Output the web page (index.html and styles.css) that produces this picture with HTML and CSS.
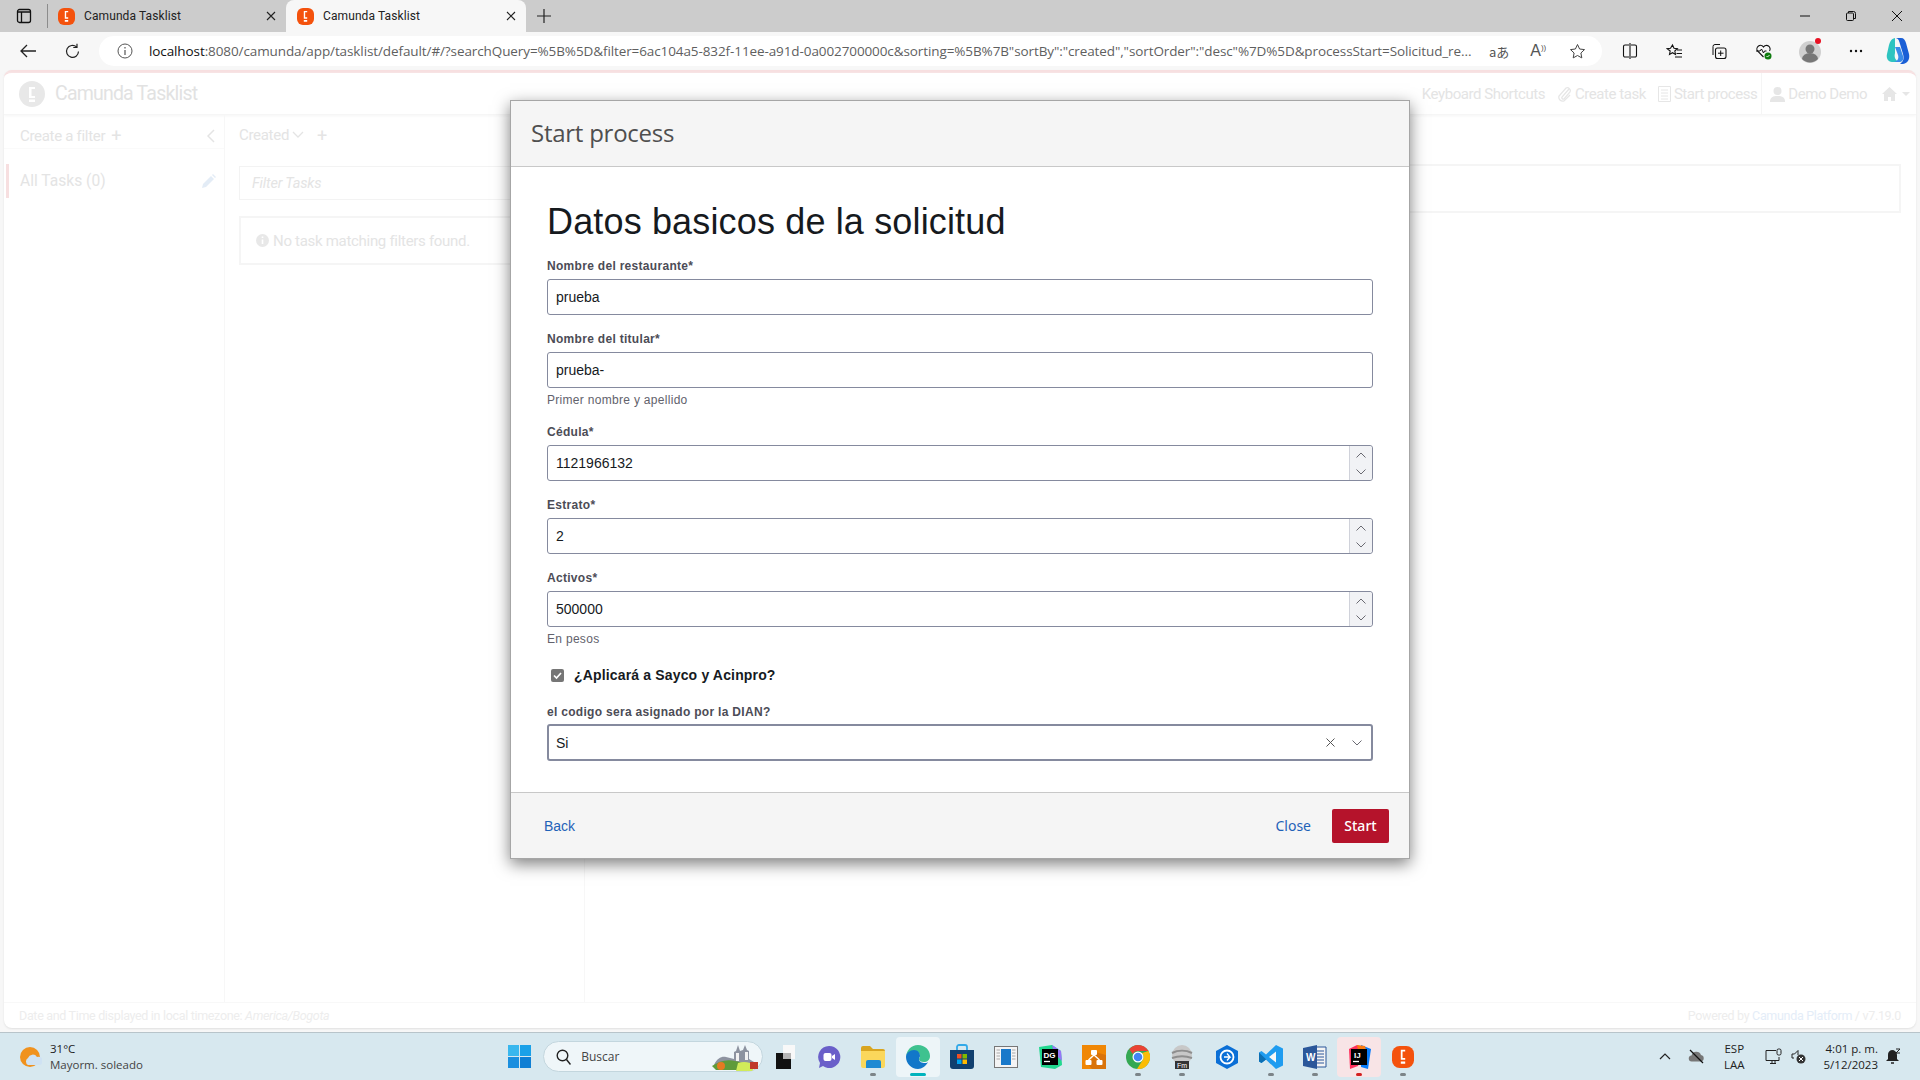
FILE: index.html
```html
<!DOCTYPE html>
<html lang="en">
  <head>
    <meta charset="UTF-8" />
    <title>Camunda Tasklist</title>
    <link rel="stylesheet" href="styles.css">
  </head>
  <body>
    <svg class="defs" width="0" height="0">
      <symbol id="cam" viewBox="0 0 20 20">
        <rect width="20" height="20" rx="7" fill="#f4520d"/>
        <path d="M8 3.500h4v1.600H9.600v5.800H12v1.600H8zM8 14h4v2.200H8z" fill="#fff"/>
      </symbol>
      <symbol id="up" viewBox="0 0 12 8"><path d="M1.5 6.5 6 2l4.500 4.500" fill="none" stroke="#6a6a72" stroke-width="1"/></symbol>
      <symbol id="down" viewBox="0 0 12 8"><path d="M1.500 1.500 6 6l4.500-4.500" fill="none" stroke="#6a6a72" stroke-width="1"/></symbol>
    </svg>

    <div class="tabbar">
      <svg class="tab-toggle" width="16" height="16" viewBox="0 0 16 16"><rect x="1.500" y="1.500" width="13" height="13" rx="2" fill="none" stroke="#111" stroke-width="1.300"/><path d="M1.500 4h13M5.500 4v10" stroke="#111" stroke-width="1.300"/></svg>
      <span class="tab-sep"></span>
      <div class="tab">
        <svg width="17" height="17"><use href="#cam"/></svg>
        <span class="tab-title">Camunda Tasklist</span>
        <svg class="tab-close" width="10" height="10" viewBox="0 0 10 10"><path d="M1 1l8 8M9 1l-8 8" stroke="#222" stroke-width="1.100"/></svg>
      </div>
      <div class="tab tab-active">
        <svg width="17" height="17"><use href="#cam"/></svg>
        <span class="tab-title">Camunda Tasklist</span>
        <svg class="tab-close" width="10" height="10" viewBox="0 0 10 10"><path d="M1 1l8 8M9 1l-8 8" stroke="#222" stroke-width="1.100"/></svg>
      </div>
      <svg class="tab-new" width="14" height="14" viewBox="0 0 14 14"><path d="M7 0v14M0 7h14" stroke="#222" stroke-width="1.200"/></svg>
      <div class="win-btns">
        <svg width="10" height="10" viewBox="0 0 10 10"><path d="M0 5h10" stroke="#111"/></svg>
        <svg width="10" height="10" viewBox="0 0 10 10"><rect x=".5" y="2" width="7" height="7.500" rx="1" fill="none" stroke="#111"/><path d="M2.500 2V.5h5a2 2 0 0 1 2 2v5H8" fill="none" stroke="#111"/></svg>
        <svg width="10" height="10" viewBox="0 0 10 10"><path d="M0 0l10 10M10 0L0 10" stroke="#111"/></svg>
      </div>
    </div>

    <div class="toolbar">
      <svg class="tool-back" width="18" height="16" viewBox="0 0 18 16"><path d="M17 8H2M8 2 2 8l6 6" fill="none" stroke="#222" stroke-width="1.300"/></svg>
      <svg class="tool-reload" width="17" height="17" viewBox="0 0 17 17"><path d="M14.500 8.500a6 6 0 1 1-2-4.600M13 .8v3.700H9.300" fill="none" stroke="#222" stroke-width="1.200"/></svg>
      <div class="address">
        <svg width="16" height="16" viewBox="0 0 16 16"><circle cx="8" cy="8" r="7" fill="none" stroke="#555"/><path d="M8 7v5M8 4v1.500" stroke="#555" stroke-width="1.200"/></svg>
        <span class="url"><b>localhost</b>:8080/camunda/app/tasklist/default/#/?searchQuery=%5B%5D&amp;filter=6ac104a5-832f-11ee-a91d-0a002700000c&amp;sorting=%5B%7B"sortBy":"created","sortOrder":"desc"%7D%5D&amp;processStart=Solicitud_re...</span>
        <span class="addr-icon addr-tr">aあ</span>
        <span class="addr-icon addr-read">A<small>))</small></span>
        <svg class="addr-star" width="17" height="17" viewBox="0 0 17 17"><path d="m8.500 1.500 2.100 4.500 4.900.6-3.600 3.400.9 4.900-4.300-2.400-4.300 2.400.9-4.900L1.500 6.600l4.900-.6z" fill="none" stroke="#444"/></svg>
      </div>
      <div class="tool-icons">
        <svg width="16" height="16" viewBox="0 0 16 16"><path d="M7 2H3a1.500 1.500 0 0 0-1.500 1.500v9A1.500 1.500 0 0 0 3 14h4M9 2h4a1.500 1.500 0 0 1 1.500 1.500v9A1.500 1.500 0 0 1 13 14H9M8 0v16" fill="none" stroke="#111" stroke-width="1.100"/></svg>
        <svg width="17" height="17" viewBox="0 0 17 17"><path d="m6.500 2 1.500 3.300 3.300.4-2.500 2.300.7 3.400-3-1.700-3 1.700.7-3.400L1.200 5.700l3.300-.4zM11 7h5M10.500 10.500H16M9 14h7" fill="none" stroke="#111" stroke-width="1.100"/></svg>
        <svg width="17" height="17" viewBox="0 0 17 17"><path d="M3 12V3.500A2 2 0 0 1 5 1.500h5" fill="none" stroke="#111"/><rect x="5.500" y="5" width="10.500" height="10.500" rx="2" fill="none" stroke="#111" stroke-width="1.100"/><path d="M10.700 7.500v5.500M8 10.200h5.500" stroke="#111"/></svg>
        <svg width="17" height="17" viewBox="0 0 17 17"><path d="M8.500 14 2.500 8a3.500 3.500 0 0 1 6-4 3.500 3.500 0 0 1 6 4" fill="none" stroke="#111" stroke-width="1.100"/><path d="M1 8h4l1.500-2 2 4 1-2h2" fill="none" stroke="#111"/><circle cx="13" cy="13" r="3.500" fill="#107c10"/><path d="m11.500 13 1 1 2-2" fill="none" stroke="#fff" stroke-width=".9"/></svg>
        <svg class="tool-nudge" width="24" height="28" viewBox="0 0 24 28"><circle cx="11" cy="15" r="11" fill="#d0d0d0"/><circle cx="11" cy="12" r="4.500" fill="#777"/><path d="M3 22a8 6 0 0 1 16 0 11 11 0 0 1-16 0z" fill="#777"/><circle cx="19" cy="4" r="3" fill="#e81123"/></svg>
        <svg class="tool-nudge" width="14" height="4" viewBox="0 0 14 4"><circle cx="2" cy="2" r="1.200" fill="#111"/><circle cx="7" cy="2" r="1.200" fill="#111"/><circle cx="12" cy="2" r="1.200" fill="#111"/></svg>
        <svg width="24" height="28" viewBox="0 0 24 28"><path d="M9 1h6c3 0 4 2 5 5l3 11c1 5-1 9-6 10h-3c4-3 4-6 3-10L14 7C13 3 12 1 9 1z" fill="#1a5fd6"/><path d="M9 1C5 2 4 5 3 8L1 17c-1 4 1 8 5 8h7c-4-2-5-5-4-9z" fill="#2ec4c0"/><path d="M9 10h5l3 9c1 4-1 6-4 6H8c4-1 5-4 4-7z" fill="#3a8be8"/></svg>
      </div>
    </div>

    <div class="page">
      <div class="page-nav">
        <svg width="26" height="26" viewBox="0 0 26 26"><circle cx="13" cy="13" r="13" fill="#e8e8e8"/><path d="M10 6h6v2h-3.500v7H16v2h-6zM10 18.500h6V21h-6z" fill="#fff"/></svg>
        <span class="brand">Camunda Tasklist</span>
        <div class="nav-right">
          <span>Keyboard Shortcuts</span>
          <span class="nav-item"><svg width="15" height="16" viewBox="0 0 15 16"><path d="M12 3 5 11a1.500 1.500 0 0 0 2 2l6-7a3 3 0 0 0-4-4L2 10a4 4 0 0 0 5 5l6-6" fill="none" stroke="#e6e6e6" stroke-width="1.300"/></svg>Create task</span>
          <span class="nav-item"><svg width="13" height="16" viewBox="0 0 13 16"><path d="M.5.5h12v15H.5zM3 4h7M3 7h7M3 10h7M3 13h7" fill="none" stroke="#e6e6e6"/></svg>Start process</span>
          <span class="nav-item nav-user"><svg width="15" height="16" viewBox="0 0 15 16"><circle cx="7.500" cy="5" r="4" fill="#e6e6e6"/><path d="M0 16c0-5 3-6 7.500-6s7.500 1 7.500 6z" fill="#e6e6e6"/></svg>Demo Demo</span>
          <span class="nav-item nav-home"><svg width="15" height="15" viewBox="0 0 15 15"><path d="M7.500 1 0 8h2v7h4v-4h3v4h4V8h2z" fill="#e6e6e6"/></svg><i class="caret"></i></span>
        </div>
      </div>
      <div class="page-main">
        <aside class="filters">
          <div class="filters-head">
            <span>Create a filter</span><b>+</b>
            <svg width="8" height="14" viewBox="0 0 8 14"><path d="M7 1 1 7l6 6" fill="none" stroke="#e4e4e4" stroke-width="1.500"/></svg>
          </div>
          <div class="filter-row">
            <span>All Tasks (0)</span>
            <svg width="14" height="14" viewBox="0 0 14 14"><path d="M0 14l1-4 8-8 3 3-8 8zM10 1l1-1 3 3-1 1z" fill="#e3ecf6"/></svg>
          </div>
        </aside>
        <section class="list">
          <div class="list-head">
            <span>Created</span>
            <svg width="12" height="8" viewBox="0 0 12 8"><path d="M1 1l5 5 5-5" fill="none" stroke="#e4e4e4" stroke-width="1.300"/></svg>
            <b>+</b>
          </div>
          <div class="filter-box">Filter Tasks</div>
          <div class="empty-box">
            <svg width="13" height="13" viewBox="0 0 13 13"><circle cx="6.500" cy="6.500" r="6.500" fill="#e8e8e8"/><path d="M6.500 5.500v4.500M6.500 2.500V4" stroke="#fff" stroke-width="1.600"/></svg>
            No task matching filters found.
          </div>
        </section>
        <section class="detail">
          <div class="detail-box"></div>
        </section>
      </div>
      <div class="page-foot">
        <span>Date and Time displayed in local timezone: <i>America/Bogota</i></span>
        <span>Powered by <em>Camunda Platform</em> / v7.19.0</span>
      </div>
    </div>

    <div class="modal">
      <div class="modal-head">Start process</div>
      <div class="modal-body">
        <h1>Datos basicos de la solicitud</h1>
        <div class="field">
          <label>Nombre del restaurante*</label>
          <div class="input">prueba</div>
        </div>
        <div class="field">
          <label>Nombre del titular*</label>
          <div class="input">prueba-</div>
          <div class="help">Primer nombre y apellido</div>
        </div>
        <div class="field">
          <label>Cédula*</label>
          <div class="input input-num">
            <span class="val">1121966132</span>
            <span class="spin"><svg width="12" height="8"><use href="#up"/></svg><svg width="12" height="8"><use href="#down"/></svg></span>
          </div>
        </div>
        <div class="field">
          <label>Estrato*</label>
          <div class="input input-num">
            <span class="val">2</span>
            <span class="spin"><svg width="12" height="8"><use href="#up"/></svg><svg width="12" height="8"><use href="#down"/></svg></span>
          </div>
        </div>
        <div class="field">
          <label>Activos*</label>
          <div class="input input-num">
            <span class="val">500000</span>
            <span class="spin"><svg width="12" height="8"><use href="#up"/></svg><svg width="12" height="8"><use href="#down"/></svg></span>
          </div>
          <div class="help">En pesos</div>
        </div>
        <div class="field check-row">
          <span class="check"><svg width="13" height="13" viewBox="0 0 13 13"><path d="m3 6.500 2.500 2.500L10 4" fill="none" stroke="#fff" stroke-width="1.700"/></svg></span>
          <span class="check-label">¿Aplicará a Sayco y Acinpro?</span>
        </div>
        <div class="field">
          <label class="label-select">el codigo sera asignado por la DIAN?</label>
          <div class="input input-select">
            <span class="val">Si</span>
            <svg width="9" height="9" viewBox="0 0 9 9"><path d="M.5.5l8 8M8.500.5l-8 8" stroke="#555" stroke-width="1"/></svg>
            <svg class="sel-down" width="12" height="8"><use href="#down"/></svg>
          </div>
        </div>
      </div>
      <div class="modal-foot">
        <a class="link link-back">Back</a>
        <a class="link link-close">Close</a>
        <button class="btn-start">Start</button>
      </div>
    </div>

    <div class="taskbar">
      <div class="weather">
        <svg width="22" height="22" viewBox="0 0 22 22"><circle cx="10" cy="11" r="10" fill="#f0921e"/><path d="M8 19a4 4 0 0 1 0-7 5 5 0 0 1 9-1 4 4 0 0 1 3 8z" fill="#cfe2f3"/></svg>
        <div class="weather-text"><span>31°C</span><span class="muted">Mayorm. soleado</span></div>
      </div>
      <div class="slot">
        <svg width="23" height="23" viewBox="0 0 23 23"><path d="M0 0h11v11H0z" fill="#38b7ee"/><path d="M12 0h11v11H12z" fill="#1ba1e8"/><path d="M0 12h11v11H0z" fill="#1a8fdf"/><path d="M12 12h11v11H12z" fill="#0f7fd4"/></svg>
      </div>
      <div class="search">
        <svg width="15" height="16" viewBox="0 0 15 16"><circle cx="6.500" cy="6.500" r="5.300" fill="none" stroke="#222" stroke-width="1.400"/><path d="m10.500 10.500 4 5" stroke="#222" stroke-width="1.500"/></svg>
        <span>Buscar</span>
        <svg class="search-art" width="48" height="28" viewBox="0 0 48 28"><path d="M2 22c3-7 8-9 12-8l8 2V9l2-1 2-6 2 6 3-1 2-5 2 5 2 1v8l5 3v7H4z" fill="#8d93a0"/><path d="M24 10h3v8h-3zM33 9h3v8h-3z" fill="#f2f2f2"/><path d="M0 23c8-6 18-8 30-3l-4 7H4z" fill="#5f9b3a"/><circle cx="9" cy="23" r="4" fill="#e67a22"/><path d="M26 20c6-2 12-1 18 3l-4 5H24z" fill="#d1eb5a"/><path d="M38 19h8v7h-8z" fill="#c0392b"/></svg>
      </div>
      <div class="apps">
        <div class="slot"><svg width="20" height="24" viewBox="0 0 20 24"><path d="M1 8h15v16H1z" fill="#111"/><path d="M8 0h12v14H8z" fill="#f8f8f8"/><path d="M8 8h8v6H8z" fill="#b5b5b5"/></svg></div>
        <div class="slot"><svg width="24" height="24" viewBox="0 0 24 24"><path d="M12 1a11 11 0 1 1-6 20l-4 2 1-5A11 11 0 0 1 12 1z" fill="#6a5fc9"/><rect x="6.500" y="8" width="8" height="8" rx="2" fill="#fff"/><path d="m15 11 3-2v6l-3-2z" fill="#fff"/></svg></div>
        <div class="slot slot-on"><svg width="24" height="22" viewBox="0 0 24 22"><path d="M0 2a2 2 0 0 1 2-2h7l3 3h10a2 2 0 0 1 2 2v1H0z" fill="#d9a520"/><path d="M0 5h24v15a2 2 0 0 1-2 2H2a2 2 0 0 1-2-2z" fill="#fbd75b"/><path d="M7 14h11a2 2 0 0 1 2 2v6H5v-6a2 2 0 0 1 2-2z" fill="#1f8ad3"/></svg></div>
        <div class="slot slot-active"><svg width="24" height="24" viewBox="0 0 24 24"><path d="M12 0c7 0 12 5 12 11 0 4-3 6-6 6s-5-1-5-3c0-1 1-1 1-3 0-3-3-5-6-5S1 8 0 11C1 5 5 0 12 0z" fill="#3ec28f"/><path d="M0 12c0-4 4-7 8-7 4 0 6 3 6 6 0 1-1 2-1 3 0 3 3 4 6 4 1 0 2 0 3-1-2 4-6 7-10 7C5 24 0 18 0 12z" fill="#1277c9"/></svg></div>
        <div class="slot"><svg width="24" height="25" viewBox="0 0 24 25"><path d="M7 6V3a2 2 0 0 1 2-2h6a2 2 0 0 1 2 2v3" fill="none" stroke="#32a9e8" stroke-width="1.800"/><path d="M0 6h24v16a3 3 0 0 1-3 3H3a3 3 0 0 1-3-3z" fill="#11406f"/><path d="M7 10h4.500v4.500H7z" fill="#f25022"/><path d="M12.500 10H17v4.500h-4.500z" fill="#7fba00"/><path d="M7 15.500h4.500V20H7z" fill="#00a4ef"/><path d="M12.500 15.500H17V20h-4.500z" fill="#ffb900"/></svg></div>
        <div class="slot"><svg width="24" height="22" viewBox="0 0 24 22"><path d="M0 0h24v22H0z" fill="#777"/><path d="M1 1h22v20H1z" fill="#f4f4f4"/><path d="M7 3h10v16H7z" fill="#1979ca"/><path d="M2.500 4H6M2.500 7H6M2.500 10H6M2.500 13H6M18 4h3.500M18 7h3.500M18 10h3.500M18 13h3.500" stroke="#aaa"/></svg></div>
        <div class="slot"><svg width="24" height="24" viewBox="0 0 24 24"><path d="M1 2 14 0l9 6 1 14-7 4-14-2z" fill="#22d88f"/><path d="M14 0l9 6 1 10-8-8z" fill="#9775f8"/><path d="M4 4h16v16H4z" fill="#000"/><text class="ico-text" x="5.500" y="12.500">DG</text><path d="M6 16.500h6" stroke="#fff" stroke-width="1.300"/></svg></div>
        <div class="slot"><svg width="24" height="24" viewBox="0 0 24 24"><path d="M0 0h24v24H0z" fill="#f08705"/><path d="M24 10v14H10L5 18l5-4 3-7z" fill="#d9730a"/><rect x="9" y="5" width="6" height="5" rx="1" fill="#fff"/><rect x="3.500" y="15" width="6" height="5" rx="1" fill="#fff"/><rect x="14.500" y="15" width="6" height="5" rx="1" fill="#fff"/><path d="m12 10-5.500 5M12 10l5.500 5" stroke="#fff" stroke-width="1.400"/></svg></div>
        <div class="slot slot-on"><svg width="24" height="24" viewBox="0 0 24 24"><circle cx="12" cy="12" r="12" fill="#34a853"/><path d="M12 0a12 12 0 0 1 10.400 6H12a6 6 0 0 0-5.300 3L3.300 4.300A12 12 0 0 1 12 0z" fill="#ea4335"/><path d="M22.400 6A12 12 0 0 1 11 24l5.700-9A6 6 0 0 0 16 8z" fill="#fbbc05"/><circle cx="12" cy="12" r="5.500" fill="#fff"/><circle cx="12" cy="12" r="4.300" fill="#4285f4"/></svg></div>
        <div class="slot slot-on"><svg width="24" height="24" viewBox="0 0 24 24"><circle cx="12" cy="10" r="10" fill="#c8c8c8"/><path d="M2 8c6-3 14-3 20 0M2 13c6-2 14-2 20 0" fill="none" stroke="#8e8e8e" stroke-width="2"/><path d="M5 16h14v8H5z" fill="#333"/><text class="ico-text ico-fm" x="7" y="22.500">Fm</text></svg></div>
        <div class="slot"><svg width="22" height="24" viewBox="0 0 22 24"><path d="M11 0l11 6v12l-11 6L0 18V6z" fill="#0b6fd6"/><circle cx="11" cy="12" r="6.500" fill="none" stroke="#fff" stroke-width="1.800"/><path d="M8 12h6l-3-3.500M14 12l-3 3.500" fill="none" stroke="#fff" stroke-width="1.300"/></svg></div>
        <div class="slot slot-on"><svg width="24" height="24" viewBox="0 0 24 24"><path d="M17 0l7 3.500v17L17 24 7 14.500 2.500 18 0 16.500v-9L2.500 6 7 9.500z" fill="#1f9cf0"/><path d="M17 6.500 10 12l7 5.500z" fill="#f7f7f7"/><path d="M0 7.500 17 24l-10-9.500L2.500 18 0 16.500z" fill="#0c6fb4"/></svg></div>
        <div class="slot slot-on"><svg width="24" height="24" viewBox="0 0 24 24"><path d="M10 2h13v20H10z" fill="#f4f4f4" stroke="#2b579a"/><path d="M13 6h8M13 9h8M13 12h8M13 15h8M13 18h8" stroke="#2b579a"/><path d="M0 3 14 0v24L0 21z" fill="#2b579a"/><text class="ico-text ico-w" x="3" y="15.500">W</text></svg></div>
        <div class="slot slot-ij"><svg width="24" height="24" viewBox="0 0 24 24"><path d="M2 4 10 0l7 3-6 18-8 3z" fill="#fe315d"/><path d="M14 0l10 4-3 20-7-2z" fill="#087cfa"/><path d="M10 0l8 1 2 8-8 1z" fill="#f97a12"/><path d="M4 4h16v16H4z" fill="#000"/><text class="ico-text" x="7" y="12.500">IJ</text><path d="M6 16.500h6" stroke="#fff" stroke-width="1.300"/></svg></div>
        <div class="slot slot-on"><svg width="22" height="22"><use href="#cam"/></svg></div>
      </div>
      <div class="tray">
        <svg class="tray-up" width="12" height="7" viewBox="0 0 12 7"><path d="M1 6l5-5 5 5" fill="none" stroke="#222" stroke-width="1.200"/></svg>
        <svg class="tray-cloud" width="17" height="15" viewBox="0 0 17 15"><path d="M4 12.500a3 3 0 0 1-.5-6 5 5 0 0 1 9.500-.5 3.300 3.300 0 0 1 0 6.500z" fill="#777"/><path d="M2 1l13 13" stroke="#111" stroke-width="1.200"/></svg>
        <div class="tray-lang"><span>ESP</span><span>LAA</span></div>
        <svg class="tray-net" width="17" height="17" viewBox="0 0 17 17"><path d="M11 2.500H1v10h13V9M5 15.500h6M7 12.500v3M10 12.500v3" fill="none" stroke="#222"/><rect x="12" y="1" width="4" height="6" rx="1.500" fill="none" stroke="#222"/></svg>
        <svg class="tray-vol" width="15" height="15" viewBox="0 0 15 15"><path d="M1 5h2.500L7 1.500V6M1 5v4h2" fill="none" stroke="#222"/><circle cx="10" cy="10" r="4.500" fill="#333"/><path d="m8 8 4 4M12 8l-4 4" stroke="#fff"/></svg>
        <div class="tray-clock"><span>4:01 p. m.</span><span>5/12/2023</span></div>
        <svg class="tray-bell" width="15" height="17" viewBox="0 0 15 17"><path d="M6 2a5 5 0 0 0-4 5v4l-2 2h13l-2-2V7a5 5 0 0 0-5-5z" fill="#222"/><path d="M5 15h3" stroke="#222" stroke-width="1.500"/><path d="M10 1h4l-4 4h4" fill="none" stroke="#222"/></svg>
      </div>
    </div>
  </body>
</html>
```

FILE: styles.css
```css
* {
  box-sizing: border-box;
}
html,
body {
  height: 100%;
}
body {
  position: relative;
  display: flex;
  flex-direction: column;
  width: 1920px;
  height: 1080px;
  margin: 0;
  overflow: hidden;
  background: #f7f7f7;
  font-family: "Liberation Sans", Arial, sans-serif;
}
.defs {
  position: absolute;
}

/* browser chrome */
.tabbar {
  display: flex;
  align-items: center;
  flex: none;
  height: 32px;
  background: #cccccc;
}
.tab-toggle {
  margin-left: 16px;
}
.tab-sep {
  width: 1px;
  height: 24px;
  margin: 0 3px 0 15px;
  background: #8c8c8c;
}
.tab {
  display: flex;
  align-items: center;
  align-self: stretch;
  width: 235px;
  padding: 0 10px 0 7px;
  font-family: Roboto, sans-serif;
  font-size: 12px;
  letter-spacing: 0.1px;
  color: #222;
}
.tab-active {
  width: 240px;
  padding-left: 11px;
  background: #f7f7f7;
  border-radius: 8px 8px 0 0;
}
.tab-title {
  flex: 1;
  margin-left: 9px;
}
.tab-new {
  margin-left: 11px;
}
.win-btns {
  display: flex;
  gap: 36px;
  margin-left: auto;
  margin-right: 18px;
}
.toolbar {
  display: flex;
  align-items: center;
  flex: none;
  height: 38px;
  background: #f7f7f7;
}
.tool-back {
  margin-left: 19px;
}
.tool-reload {
  margin-left: 27px;
}
.address {
  display: flex;
  align-items: center;
  width: 1505px;
  height: 30px;
  margin-left: 18px;
  padding: 0 16px 0 18px;
  border-radius: 15px;
  background: #fff;
}
.url {
  flex: 1;
  margin-left: 16px;
  white-space: nowrap;
  font-family: "Open Sans", sans-serif;
  font-size: 13.500px;
  letter-spacing: -0.1px;
  color: #5f5f5f;
}
.url b {
  font-weight: 400;
  color: #111;
}
.addr-icon {
  font-size: 13px;
  color: #555;
}
.addr-tr {
  margin-left: 2px;
  font-family: "Noto Sans CJK JP", sans-serif;
}
.addr-read {
  margin-left: 21px;
  font-size: 16px;
}
.addr-read small {
  font-size: 8px;
  vertical-align: 6px;
}
.addr-star {
  margin-left: 23px;
}
.tool-icons {
  display: grid;
  grid-template-columns: repeat(7, 44.700px);
  justify-items: center;
  align-items: center;
  margin-left: 5px;
}
.tool-nudge {
  margin-left: 6px;
}

/* washed out page behind the dialog */
.page {
  display: flex;
  flex-direction: column;
  flex: none;
  height: 958px;
  margin: 0 4px;
  border-top: 3px solid #f7dfe0;
  border-radius: 8px;
  background: #fff;
  box-shadow: 0 1px 2px #e0e0e0;
  font-family: Roboto, sans-serif;
  color: #e4e4e4;
}
.page-nav {
  display: flex;
  align-items: center;
  flex: none;
  height: 42px;
  padding-left: 15px;
  border-bottom: 1px solid #f6f6f6;
  box-shadow: 0 1px 3px #f5f5f5;
}
.brand {
  margin-left: 10px;
  font-size: 19.500px;
  letter-spacing: -0.8px;
  color: #e2e2e2;
}
.nav-right {
  display: flex;
  align-items: center;
  gap: 12px;
  align-self: stretch;
  margin-left: auto;
  padding-right: 6px;
  font-size: 15px;
  letter-spacing: -0.45px;
}
.nav-item {
  display: flex;
  align-items: center;
  gap: 3px;
}
.nav-user {
  align-self: stretch;
  margin-left: -8px;
  padding-left: 8px;
  border-left: 1px solid #f5f5f5;
}
.nav-home {
  gap: 5px;
  margin-left: 3px;
}
.caret {
  border: 4px solid transparent;
  border-top-color: #e6e6e6;
  border-bottom: 0;
}
.page-main {
  display: flex;
  flex: 1;
}
.filters {
  width: 221px;
  padding-top: 8px;
  border-right: 1px solid #f7f7f7;
}
.filters-head {
  display: flex;
  align-items: center;
  height: 26px;
  padding: 0 9px 0 16px;
  border-bottom: 1px solid #fafafa;
  font-size: 15px;
  letter-spacing: -0.3px;
}
.filters-head b,
.list-head b {
  margin-left: 6px;
  font-size: 18px;
  font-weight: 400;
}
.filters-head svg {
  margin-left: auto;
}
.filter-row {
  display: flex;
  align-items: center;
  justify-content: space-between;
  height: 34px;
  margin-top: 15px;
  margin-left: 2px;
  padding: 0 8px 0 11px;
  border-left: 3px solid #f7dfe0;
  font-size: 15.600px;
}
.list {
  width: 360px;
  padding: 8px 14px 0;
  border-right: 1px solid #f7f7f7;
}
.list-head {
  display: flex;
  align-items: center;
  height: 24px;
  font-size: 15px;
  letter-spacing: -0.3px;
}
.list-head svg {
  margin-left: 3px;
}
.list-head b {
  margin-left: 13px;
}
.filter-box {
  height: 34px;
  margin-top: 19px;
  padding: 0 12px;
  border: 1px solid #f3f3f3;
  font-size: 14.500px;
  font-style: italic;
  line-height: 33px;
  letter-spacing: -0.2px;
}
.empty-box {
  display: flex;
  align-items: center;
  gap: 4px;
  height: 49px;
  margin-top: 16px;
  padding: 0 15px;
  border: 2px solid #f5f5f5;
  font-size: 15px;
  letter-spacing: -0.3px;
}
.detail {
  flex: 1;
  padding: 49px 15px 0 0;
}
.detail-box {
  height: 49px;
  border: 2px solid #f5f5f5;
  border-left: 0;
}
.page-foot {
  display: flex;
  justify-content: space-between;
  flex: none;
  height: 26px;
  padding: 0 15px;
  border-top: 1px solid #f8f8f8;
  font-size: 12.500px;
  line-height: 25px;
  letter-spacing: -0.32px;
  color: #ededed;
}
.page-foot em {
  font-style: normal;
  color: #e4edf8;
}

/* dialog */
.modal {
  position: absolute;
  top: 100px;
  left: 510px;
  display: flex;
  flex-direction: column;
  width: 900px;
  height: 759px;
  border: 1px solid #a6a6a6;
  background: #fff;
  box-shadow: 0 5px 15px rgba(0, 0, 0, 0.5);
}
.modal-head {
  flex: none;
  height: 66px;
  padding-left: 20px;
  border-bottom: 1px solid #c8c8c8;
  background: #f5f5f5;
  font-family: "Open Sans", sans-serif;
  font-size: 24px;
  line-height: 64px;
  letter-spacing: -0.25px;
  color: #4f4f4f;
}
.modal-body {
  flex: 1;
  padding: 33px 36px 0;
}
.modal-body h1 {
  margin: 0 0 14px;
  font-size: 36px;
  font-weight: 400;
  line-height: 44px;
  letter-spacing: 0.15px;
  color: #161a1e;
}
.field {
  margin-bottom: 16px;
}
.field label {
  display: block;
  margin-bottom: 5px;
  font-size: 12px;
  font-weight: 700;
  line-height: 16px;
  letter-spacing: 0.3px;
  color: #4c4c56;
}
.field .label-select {
  margin-bottom: 4px;
}
.input {
  display: flex;
  align-items: center;
  height: 36px;
  padding-left: 8px;
  border: 1px solid #858a9e;
  border-radius: 3px;
  font-size: 14px;
  color: #161a1e;
}
.val {
  flex: 1;
}
.spin {
  display: flex;
  flex-direction: column;
  align-items: center;
  justify-content: center;
  gap: 9px;
  align-self: stretch;
  width: 23px;
  border-left: 1px solid #d0d2da;
  border-radius: 0 3px 3px 0;
  background: #f1f2f5;
}
.input-select {
  height: 37px;
  padding: 0 8px 0 7px;
  border-width: 2px;
}
.sel-down {
  margin-left: 16px;
}
.help {
  margin-top: 4px;
  font-size: 12px;
  line-height: 16px;
  letter-spacing: 0.3px;
  color: #62626c;
}
.check-row {
  display: flex;
  align-items: center;
  height: 24px;
  margin-bottom: 17px;
  padding-left: 4px;
}
.check {
  display: flex;
  width: 13px;
  height: 13px;
  border-radius: 2px;
  background: #767676;
}
.check-label {
  margin-left: 10px;
  font-size: 14px;
  font-weight: 700;
  letter-spacing: 0.16px;
  color: #161a1e;
}
.modal-foot {
  display: flex;
  align-items: center;
  flex: none;
  height: 66px;
  padding: 0 20px 0 33px;
  border-top: 1px solid #c8c8c8;
  background: #f5f5f5;
}
.link {
  font-size: 14px;
  color: #1f62b8;
}
.link-close {
  margin-left: auto;
  font-family: "Noto Sans", sans-serif;
}
.btn-start {
  width: 57px;
  height: 34px;
  margin-left: 21px;
  border: 0;
  border-radius: 2px;
  background: #b5132b;
  font-family: "Noto Sans", sans-serif;
  font-size: 14px;
  font-weight: 500;
  color: #fff;
}

/* windows taskbar */
.taskbar {
  display: flex;
  align-items: center;
  flex: none;
  height: 48px;
  margin-top: 4px;
  border-top: 1px solid #b8c4ca;
  background: #d7e8ef;
  font-family: "Open Sans", sans-serif;
  font-size: 11.500px;
  color: #222;
}
.weather {
  display: flex;
  align-items: center;
  gap: 8px;
  width: 497px;
  padding-left: 20px;
}
.weather-text {
  display: flex;
  flex-direction: column;
  line-height: 16px;
}
.muted {
  color: #444;
}
.slot {
  position: relative;
  display: flex;
  align-items: center;
  justify-content: center;
  flex: none;
  width: 44.150px;
  height: 40px;
  border-radius: 4px;
}
.slot-on::after,
.slot-active::after,
.slot-ij::after {
  content: "";
  position: absolute;
  bottom: 1px;
  left: 50%;
  width: 6px;
  height: 3px;
  margin-left: -3px;
  border-radius: 2px;
  background: #7c8488;
}
.slot-active {
  background: #edf5f8;
}
.slot-active::after {
  width: 16px;
  margin-left: -8px;
  background: #00b3bd;
}
.slot-ij {
  background: #f8e4e6;
}
.slot-ij::after {
  background: #d32020;
}
.search {
  display: flex;
  align-items: center;
  flex: none;
  width: 220px;
  height: 31px;
  margin-left: 2px;
  padding: 0 2px 0 12px;
  border: 1px solid #c3d6de;
  border-radius: 16px;
  background: #eff6f9;
  font-size: 12px;
  color: #444;
}
.search span {
  margin-left: 10px;
}
.search-art {
  margin-left: auto;
}
.apps {
  display: flex;
  align-items: center;
}
.ico-text {
  font-family: "Liberation Sans", sans-serif;
  font-size: 8px;
  font-weight: 700;
  fill: #fff;
}
.ico-fm {
  font-size: 7px;
  font-weight: 400;
}
.ico-w {
  font-size: 10px;
}
.tray {
  display: flex;
  align-items: center;
  margin-left: auto;
  padding-right: 19px;
}
.tray-lang {
  display: flex;
  flex-direction: column;
  align-items: center;
  margin-left: 19px;
  line-height: 16px;
}
.tray-cloud {
  margin-left: 17px;
}
.tray-net {
  margin-left: 20px;
}
.tray-vol {
  margin-left: 9px;
}
.tray-clock {
  display: flex;
  flex-direction: column;
  align-items: flex-end;
  margin-left: 18px;
  line-height: 16px;
}
.tray-bell {
  margin-left: 8px;
}
```
